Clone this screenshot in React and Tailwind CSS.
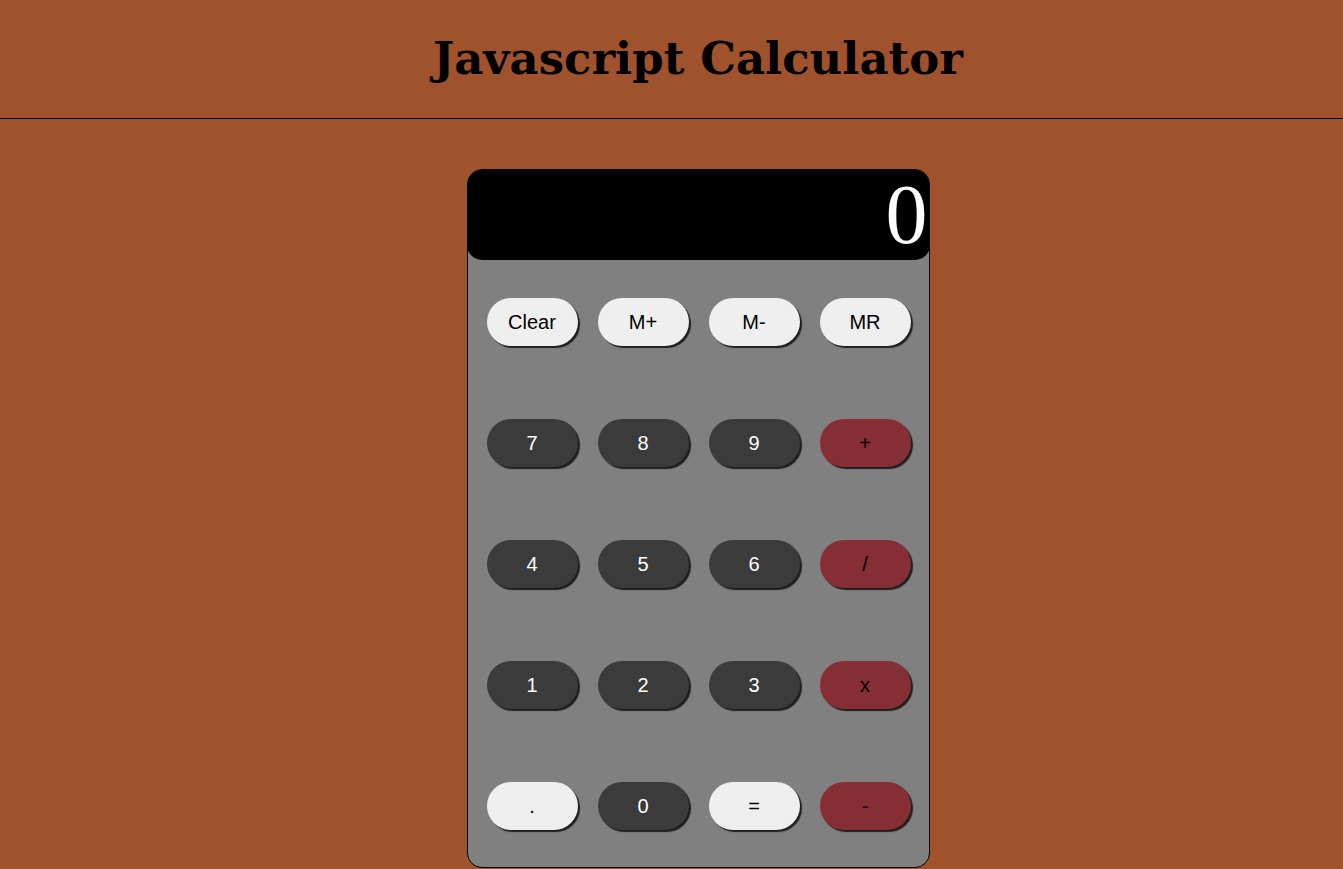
const rows = [
  [
    { label: 'Clear', kind: 'light' },
    { label: 'M+', kind: 'light' },
    { label: 'M-', kind: 'light' },
    { label: 'MR', kind: 'light' },
  ],
  [
    { label: '7', kind: 'dark' },
    { label: '8', kind: 'dark' },
    { label: '9', kind: 'dark' },
    { label: '+', kind: 'op' },
  ],
  [
    { label: '4', kind: 'dark' },
    { label: '5', kind: 'dark' },
    { label: '6', kind: 'dark' },
    { label: '/', kind: 'op' },
  ],
  [
    { label: '1', kind: 'dark' },
    { label: '2', kind: 'dark' },
    { label: '3', kind: 'dark' },
    { label: 'x', kind: 'op' },
  ],
  [
    { label: '.', kind: 'light' },
    { label: '0', kind: 'dark' },
    { label: '=', kind: 'light' },
    { label: '-', kind: 'op' },
  ],
];

const kindClass = {
  light: 'bg-[#efefef] text-black',
  dark: 'bg-[#3b3b3b] text-white',
  op: 'bg-[#862e33] text-black',
};

export default function App() {
  return (
    <div className="min-h-screen bg-[#a0522d] font-['Liberation_Sans',Arial,sans-serif]">
      <header className="border-b border-black pl-[53px] h-[119px] flex items-center justify-center">
        <h1 className="font-['DejaVu_Serif','Liberation_Serif',serif] text-[45px] font-bold text-black">
          Javascript Calculator
        </h1>
      </header>

      <div className="flex justify-center pl-[53px] pt-[50px]">
        <div className="w-[463px] h-[699px] rounded-[15px] border border-black bg-[#808080] overflow-hidden">
          <div className="h-[91px] rounded-[15px] bg-black flex items-center justify-end -mt-px -mx-px pr-[2px]">
            <span className="font-['Liberation_Serif',serif] text-[84px] leading-none text-white">0</span>
          </div>
          <div className="flex flex-col gap-[73px] pl-[19px] pt-[38px]">
            {rows.map((row, i) => (
              <div key={i} className="flex gap-[20px]">
                {row.map((b) => (
                  <button
                    key={b.label}
                    type="button"
                    className={`w-[91px] h-[48px] rounded-full text-[20px] pb-px shadow-[2px_2px_1px_#1e1e1e] ${kindClass[b.kind]}`}
                  >
                    {b.label}
                  </button>
                ))}
              </div>
            ))}
          </div>
        </div>
      </div>
    </div>
  );
}
